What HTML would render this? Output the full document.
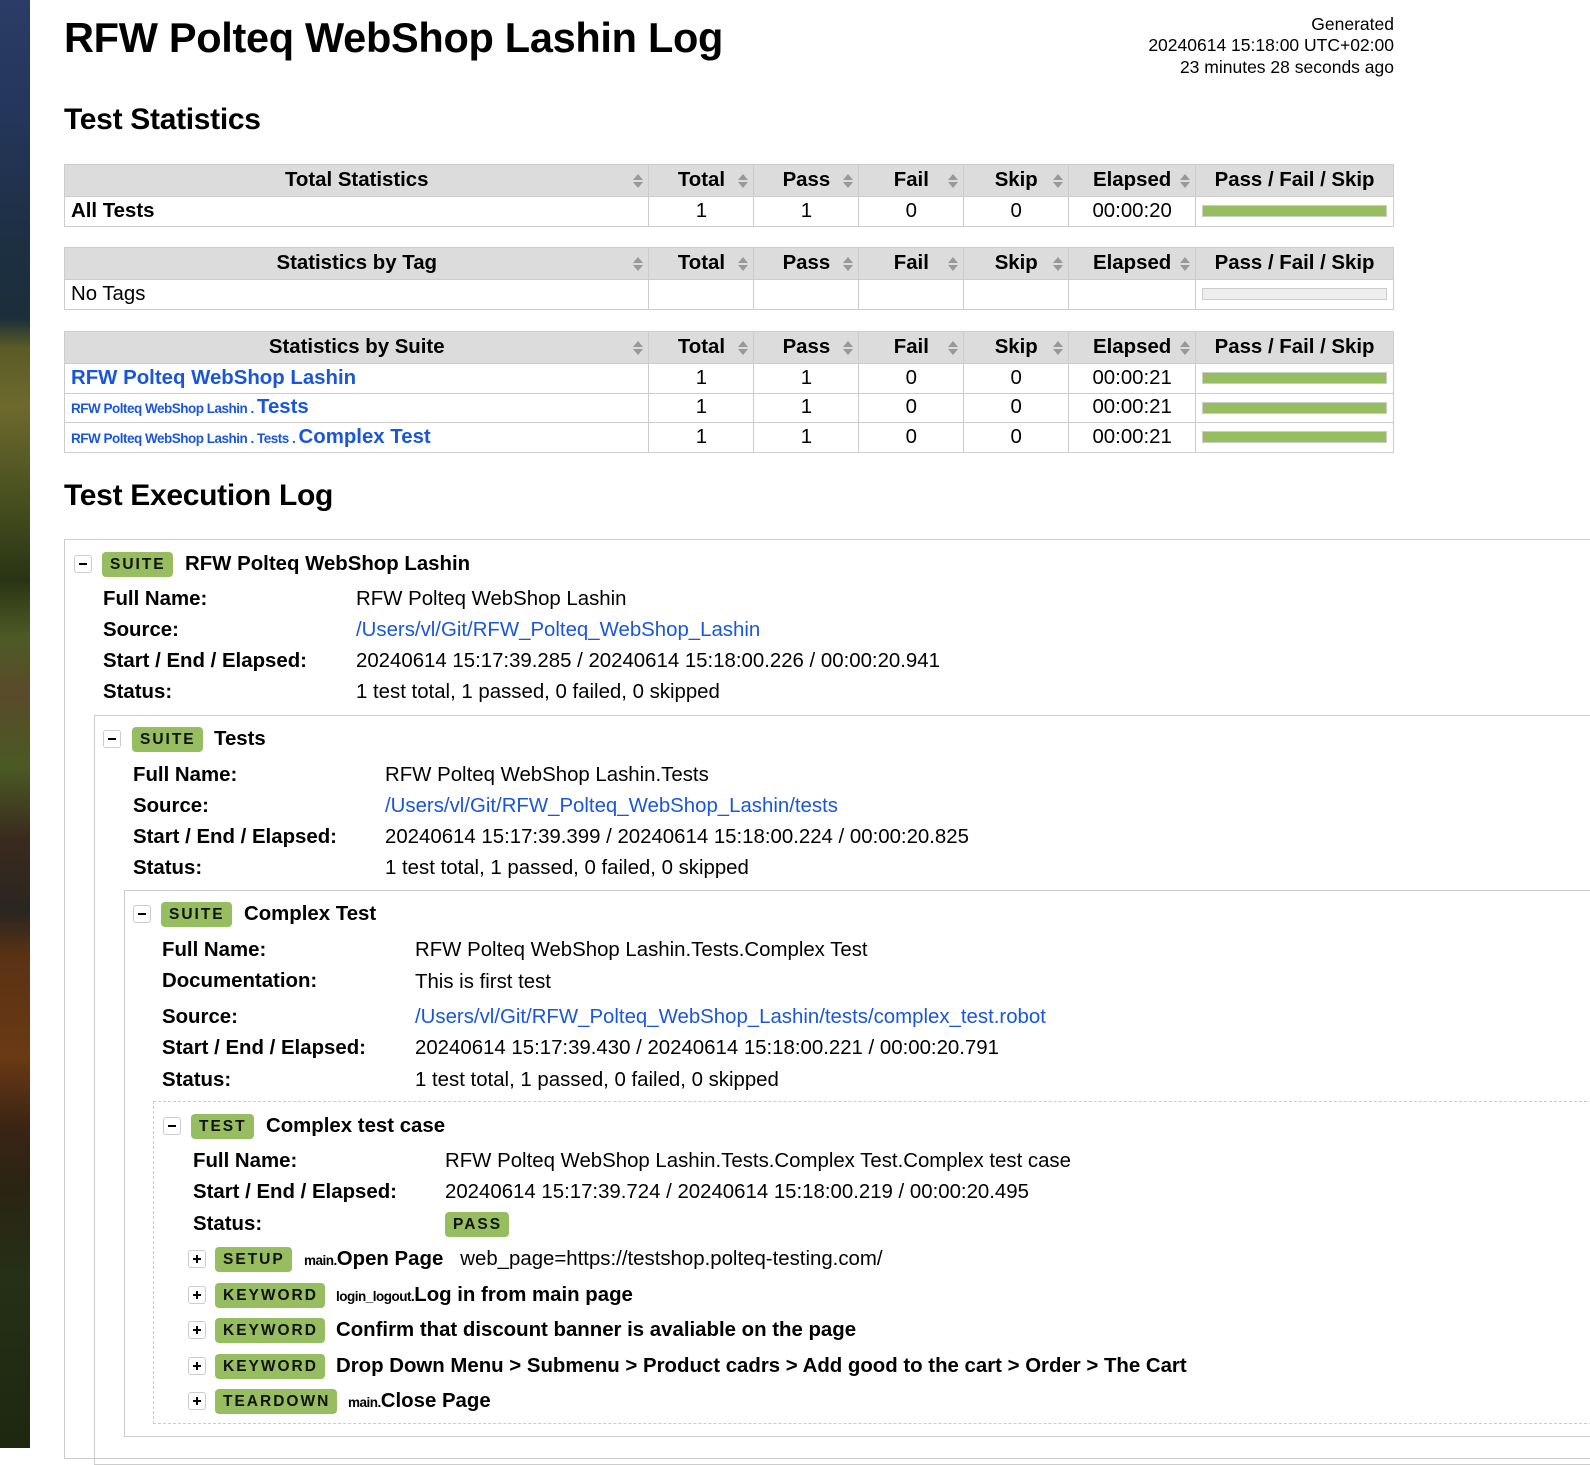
<!DOCTYPE html>
<html><head><meta charset="utf-8">
<style>
*{margin:0;padding:0;box-sizing:border-box}
body{width:1590px;height:1448px;overflow:hidden;background:#fff;font-family:"Liberation Sans",Arial,sans-serif;color:#000;position:relative}
#strip{position:absolute;left:0;top:0;width:30px;height:1448px;background:linear-gradient(to bottom,#2b3c66 0%,#24365a 8%,#1d3044 16%,#1c2e3a 22%,#5b5a26 24%,#6e6a2e 28%,#4a5220 34%,#2a3414 40%,#4e5a26 44%,#5a4a2a 48%,#4a5a24 53%,#3a2a1e 58%,#2a2620 63%,#5a3214 66%,#6a3a14 73%,#3a2414 78%,#2a2412 82%,#263016 88%,#1e2810 100%)}
h1{position:absolute;left:64px;top:14px;font-size:41.5px;font-weight:bold;letter-spacing:-0.3px}
h2{position:absolute;left:64px;font-size:30px;font-weight:bold;letter-spacing:-0.3px}
#gen{position:absolute;right:196px;top:14px;text-align:right;font-size:17.5px;line-height:21.3px}
table{position:absolute;left:64px;width:1330px;border-collapse:collapse;font-size:20.4px}
th{background:#dcdcdc;height:32px;border:1px solid #ccc;font-weight:bold;text-align:center;position:relative;padding:0}
td{border:1px solid #ccc;height:29.5px;text-align:center;padding:0}
td.n{text-align:left;padding-left:6px}
th .s{position:absolute;right:5px;top:9px;width:10px;height:14px}
th .s:before{content:"";position:absolute;left:0;top:0;border:5px solid transparent;border-bottom:6px solid #999;border-top:0}
th .s:after{content:"";position:absolute;left:0;top:8px;border:5px solid transparent;border-top:6px solid #999;border-bottom:0}
.bar{display:block;margin:0 6px;height:12px;background:#97bd61;border:1px solid #ccc}
.bar.e{background:#eee}
a,.lk{color:#1a56db;text-decoration:none}
td a{font-weight:bold}
.sm{font-size:13.5px;font-weight:bold;color:#1a56db;letter-spacing:-0.5px}
.box{position:absolute;right:-2px;border:1px solid #ccc}
.box.d{border-style:dashed}
.tg{position:absolute;background:#97bd61;border-radius:4px;font-weight:bold;font-size:15.5px;letter-spacing:2px;height:25px;line-height:25px;padding:0 7px 0 8px;color:#111}
.t{position:absolute;font-size:20.4px;white-space:nowrap;line-height:24px}
.b{font-weight:bold}
.tog{position:absolute;width:18px;height:18px;border:1px solid #ccc;border-radius:3px;background:#fff}
.tog:before{content:"";position:absolute;left:4px;top:7px;width:8px;height:2px;background:#000}
.tog.p:after{content:"";position:absolute;left:7px;top:4px;width:2px;height:8px;background:#000}
.pre{font-size:13.5px;font-weight:bold;letter-spacing:-0.5px}
</style></head><body>
<div id="strip"></div>
<h1>RFW Polteq WebShop Lashin Log</h1>
<div id="gen">Generated<br>20240614 15:18:00 UTC+02:00<br>23 minutes 28 seconds ago</div>
<h2 style="top:103px">Test Statistics</h2>

<table style="top:164px">
<colgroup><col style="width:585px"><col style="width:105px"><col style="width:105px"><col style="width:105px"><col style="width:105px"><col style="width:127px"><col style="width:198px"></colgroup>
<tr><th>Total Statistics<i class="s"></i></th><th>Total<i class="s"></i></th><th>Pass<i class="s"></i></th><th>Fail<i class="s"></i></th><th>Skip<i class="s"></i></th><th>Elapsed<i class="s"></i></th><th>Pass / Fail / Skip</th></tr>
<tr><td class="n b">All Tests</td><td>1</td><td>1</td><td>0</td><td>0</td><td>00:00:20</td><td><span class="bar"></span></td></tr>
</table>

<table style="top:247px">
<colgroup><col style="width:585px"><col style="width:105px"><col style="width:105px"><col style="width:105px"><col style="width:105px"><col style="width:127px"><col style="width:198px"></colgroup>
<tr><th>Statistics by Tag<i class="s"></i></th><th>Total<i class="s"></i></th><th>Pass<i class="s"></i></th><th>Fail<i class="s"></i></th><th>Skip<i class="s"></i></th><th>Elapsed<i class="s"></i></th><th>Pass / Fail / Skip</th></tr>
<tr><td class="n">No Tags</td><td></td><td></td><td></td><td></td><td></td><td><span class="bar e"></span></td></tr>
</table>

<table style="top:331px">
<colgroup><col style="width:585px"><col style="width:105px"><col style="width:105px"><col style="width:105px"><col style="width:105px"><col style="width:127px"><col style="width:198px"></colgroup>
<tr><th>Statistics by Suite<i class="s"></i></th><th>Total<i class="s"></i></th><th>Pass<i class="s"></i></th><th>Fail<i class="s"></i></th><th>Skip<i class="s"></i></th><th>Elapsed<i class="s"></i></th><th>Pass / Fail / Skip</th></tr>
<tr><td class="n"><a>RFW Polteq WebShop Lashin</a></td><td>1</td><td>1</td><td>0</td><td>0</td><td>00:00:21</td><td><span class="bar"></span></td></tr>
<tr><td class="n"><span class="sm">RFW Polteq WebShop Lashin . </span><a>Tests</a></td><td>1</td><td>1</td><td>0</td><td>0</td><td>00:00:21</td><td><span class="bar"></span></td></tr>
<tr><td class="n"><span class="sm">RFW Polteq WebShop Lashin . Tests . </span><a>Complex Test</a></td><td>1</td><td>1</td><td>0</td><td>0</td><td>00:00:21</td><td><span class="bar"></span></td></tr>
</table>

<h2 style="top:479px">Test Execution Log</h2>

<div class="box" style="left:64px;top:539px;height:920px"></div>
<div class="box" style="left:94px;top:715px;height:750px"></div>
<div class="box" style="left:124px;top:890px;height:547px"></div>
<div class="box d" style="left:153px;top:1101px;height:323px"></div>

<div class="tog" style="left:74px;top:555px"></div>
<div class="tg" style="left:102px;top:552px">SUITE</div>
<div class="t b" style="left:185px;top:552px">RFW Polteq WebShop Lashin</div>
<div class="t b" style="left:103px;top:587px">Full Name:</div><div class="t" style="left:356px;top:587px">RFW Polteq WebShop Lashin</div>
<div class="t b" style="left:103px;top:618px">Source:</div><div class="t lk" style="left:356px;top:618px">/Users/vl/Git/RFW_Polteq_WebShop_Lashin</div>
<div class="t b" style="left:103px;top:649px">Start / End / Elapsed:</div><div class="t" style="left:356px;top:649px">20240614 15:17:39.285 / 20240614 15:18:00.226 / 00:00:20.941</div>
<div class="t b" style="left:103px;top:680px">Status:</div><div class="t" style="left:356px;top:680px">1 test total, 1 passed, 0 failed, 0 skipped</div>

<div class="tog" style="left:103px;top:730px"></div>
<div class="tg" style="left:132px;top:727px">SUITE</div>
<div class="t b" style="left:214px;top:727px">Tests</div>
<div class="t b" style="left:133px;top:763px">Full Name:</div><div class="t" style="left:385px;top:763px">RFW Polteq WebShop Lashin.Tests</div>
<div class="t b" style="left:133px;top:794px">Source:</div><div class="t lk" style="left:385px;top:794px">/Users/vl/Git/RFW_Polteq_WebShop_Lashin/tests</div>
<div class="t b" style="left:133px;top:825px">Start / End / Elapsed:</div><div class="t" style="left:385px;top:825px">20240614 15:17:39.399 / 20240614 15:18:00.224 / 00:00:20.825</div>
<div class="t b" style="left:133px;top:856px">Status:</div><div class="t" style="left:385px;top:856px">1 test total, 1 passed, 0 failed, 0 skipped</div>

<div class="tog" style="left:133px;top:905px"></div>
<div class="tg" style="left:161px;top:902px">SUITE</div>
<div class="t b" style="left:244px;top:902px">Complex Test</div>
<div class="t b" style="left:162px;top:938px">Full Name:</div><div class="t" style="left:415px;top:938px">RFW Polteq WebShop Lashin.Tests.Complex Test</div>
<div class="t b" style="left:162px;top:969px">Documentation:</div><div class="t" style="left:415px;top:970px">This is first test</div>
<div class="t b" style="left:162px;top:1005px">Source:</div><div class="t lk" style="left:415px;top:1005px">/Users/vl/Git/RFW_Polteq_WebShop_Lashin/tests/complex_test.robot</div>
<div class="t b" style="left:162px;top:1036px">Start / End / Elapsed:</div><div class="t" style="left:415px;top:1036px">20240614 15:17:39.430 / 20240614 15:18:00.221 / 00:00:20.791</div>
<div class="t b" style="left:162px;top:1068px">Status:</div><div class="t" style="left:415px;top:1068px">1 test total, 1 passed, 0 failed, 0 skipped</div>

<div class="tog" style="left:163px;top:1117px"></div>
<div class="tg" style="left:191px;top:1114px">TEST</div>
<div class="t b" style="left:266px;top:1114px">Complex test case</div>
<div class="t b" style="left:193px;top:1149px">Full Name:</div><div class="t" style="left:445px;top:1149px">RFW Polteq WebShop Lashin.Tests.Complex Test.Complex test case</div>
<div class="t b" style="left:193px;top:1180px">Start / End / Elapsed:</div><div class="t" style="left:445px;top:1180px">20240614 15:17:39.724 / 20240614 15:18:00.219 / 00:00:20.495</div>
<div class="t b" style="left:193px;top:1212px">Status:</div>
<div class="tg" style="left:445px;top:1212px">PASS</div>

<div class="tog p" style="left:188px;top:1250px"></div>
<div class="tg" style="left:215px;top:1247px">SETUP</div>
<div class="t" style="left:304px;top:1247px"><span class="pre">main.</span><b>Open Page</b>&nbsp;&nbsp; web_page=https://testshop.polteq-testing.com/</div>

<div class="tog p" style="left:188px;top:1286px"></div>
<div class="tg" style="left:215px;top:1283px">KEYWORD</div>
<div class="t" style="left:336px;top:1283px"><span class="pre">login_logout.</span><b>Log in from main page</b></div>

<div class="tog p" style="left:188px;top:1321px"></div>
<div class="tg" style="left:215px;top:1318px">KEYWORD</div>
<div class="t b" style="left:336px;top:1318px">Confirm that discount banner is avaliable on the page</div>

<div class="tog p" style="left:188px;top:1357px"></div>
<div class="tg" style="left:215px;top:1354px">KEYWORD</div>
<div class="t b" style="left:336px;top:1354px">Drop Down Menu &gt; Submenu &gt; Product cadrs &gt; Add good to the cart &gt; Order &gt; The Cart</div>

<div class="tog p" style="left:188px;top:1392px"></div>
<div class="tg" style="left:215px;top:1389px">TEARDOWN</div>
<div class="t" style="left:348px;top:1389px"><span class="pre">main.</span><b>Close Page</b></div>
</body></html>
